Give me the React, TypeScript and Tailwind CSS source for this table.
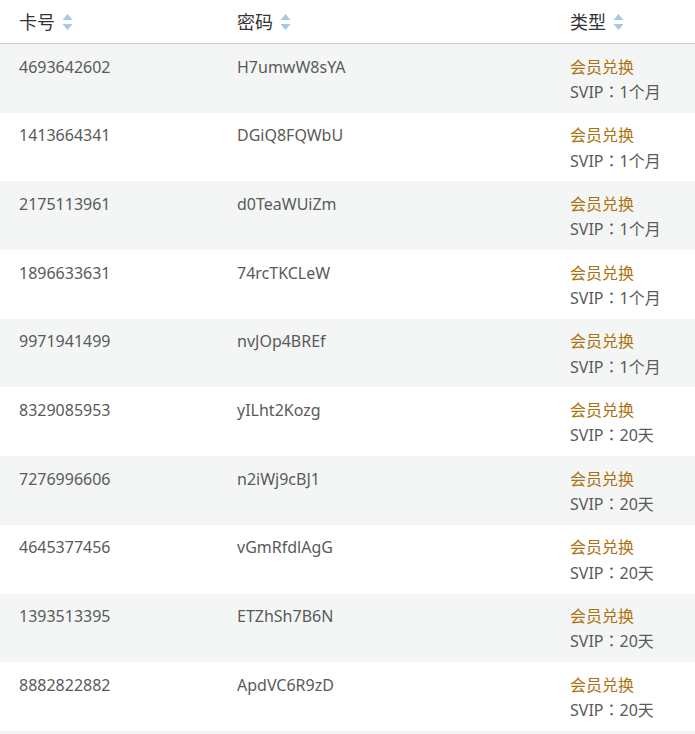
const rows = [
  ['4693642602', 'H7umwW8sYA', '1个月'],
  ['1413664341', 'DGiQ8FQWbU', '1个月'],
  ['2175113961', 'd0TeaWUiZm', '1个月'],
  ['1896633631', '74rcTKCLeW', '1个月'],
  ['9971941499', 'nvJOp4BREf', '1个月'],
  ['8329085953', 'yILht2Kozg', '20天'],
  ['7276996606', 'n2iWj9cBJ1', '20天'],
  ['4645377456', 'vGmRfdlAgG', '20天'],
  ['1393513395', 'ETZhSh7B6N', '20天'],
  ['8882822882', 'ApdVC6R9zD', '20天'],
]

function SortIcon() {
  return (
    <svg width="11" height="18" viewBox="0 0 11 18" className="ml-[7px] shrink-0">
      <path d="M5.5 1 L10.5 7 L0.5 7 Z" fill="#a9c7e1" />
      <path d="M0.5 11 L10.5 11 L5.5 17 Z" fill="#a9c7e1" />
    </svg>
  )
}

function HeadCell({ label }: { label: string }) {
  return (
    <div className="flex items-center">
      <span>{label}</span>
      <SortIcon />
    </div>
  )
}

export default function App() {
  return (
    <div
      className="w-[695px] bg-white text-[16px] text-[#5a5a5a]"
      style={{ fontFamily: '"Noto Sans", "Noto Sans CJK SC", sans-serif' }}
    >
      <div className="grid h-[44px] grid-cols-[218px_333px_1fr] items-center border-b border-[#c9c9c9] pl-[19px] pt-px text-[18px] text-[#333]">
        <HeadCell label="卡号" />
        <HeadCell label="密码" />
        <HeadCell label="类型" />
      </div>
      {rows.map((r, i) => (
        <div
          key={r[0]}
          className={
            'grid h-[68.7px] grid-cols-[218px_333px_1fr] pl-[19px] pt-[10.5px] pb-[9.5px] leading-[24.35px] ' +
            (i % 2 === 0 ? 'bg-[#f4f6f6]' : 'bg-white')
          }
        >
          <div>{r[0]}</div>
          <div>{r[1]}</div>
          <div>
            <div className="text-[#ad7210]">会员兑换</div>
            <div>
              SVIP
              <span style={{ fontFamily: '"Noto Sans CJK TC", sans-serif' }}>：</span>
              {r[2]}
            </div>
          </div>
        </div>
      ))}
      <div className="h-[69px] bg-[#f4f6f6]" />
    </div>
  )
}
